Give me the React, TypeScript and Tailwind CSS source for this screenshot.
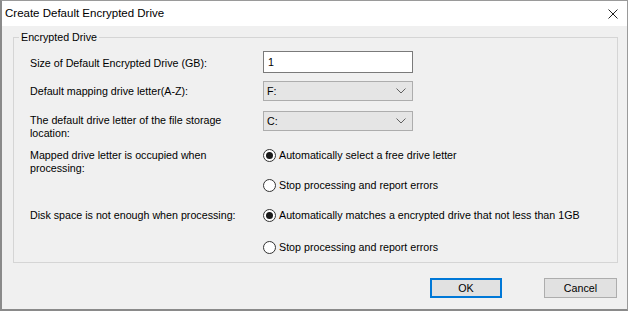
import React from "react"

function Radio({ checked, label }: { checked?: boolean; label: string }) {
  return (
    <label className="flex items-center h-[13px] gap-[3px] leading-[13px]">
      <span className="flex items-center justify-center w-[13px] h-[13px] rounded-full border border-[#333333] bg-white shrink-0">
        {checked && <span className="w-[7px] h-[7px] rounded-full bg-[#1a1a1a]" />}
      </span>
      <span>{label}</span>
    </label>
  )
}

function Chevron() {
  return (
    <svg width="10" height="6" viewBox="0 0 10 6" className="shrink-0">
      <path d="M0.5 0.5 L5 5 L9.5 0.5" fill="none" stroke="#606060" strokeWidth="1" />
    </svg>
  )
}

function Select({ value }: { value: string }) {
  return (
    <div className="flex items-center justify-between w-[150px] h-[20px] bg-[#e5e5e5] border border-[#adadad] pl-[3px] pr-[6px]">
      <span>{value}</span>
      <Chevron />
    </div>
  )
}

export default function App() {
  return (
    <div className="w-[628px] h-[311px] bg-[#f0f0f0] border border-[#9a9a9a] border-l-2 border-b-2 border-l-[#8a8a8a] border-b-[#8a8a8a] flex flex-col font-['Liberation_Sans',Arial,sans-serif] text-[10.7px] text-black">
      {/* title bar */}
      <div className="h-[25px] bg-white flex items-center justify-between pl-[3px] pr-[9px] shrink-0">
        <span className="text-[11.5px]">Create Default Encrypted Drive</span>
        <svg width="10" height="10" viewBox="0 0 10 10">
          <path d="M0.5 0.5 L9.5 9.5 M9.5 0.5 L0.5 9.5" stroke="#222" strokeWidth="1" fill="none" />
        </svg>
      </div>

      <fieldset className="mt-[5px] ml-[11px] w-[605px] h-[232px] border border-[#d5d5d5] pl-[5px] shrink-0">
        <legend className="px-[2px] leading-[13px]">Encrypted Drive</legend>
        <div className="flex flex-col pl-[11px]">
          <div className="flex items-center mt-[7px] h-[22px]">
            <span className="w-[233px] pt-[3px]">Size of Default Encrypted Drive (GB):</span>
            <div className="w-[150px] h-[22px] bg-white border border-[#7a7a7a] flex items-center pl-[4px]">1</div>
          </div>
          <div className="flex items-center mt-[8px] h-[20px]">
            <span className="w-[233px]">Default mapping drive letter(A-Z):</span>
            <Select value="F:" />
          </div>
          <div className="flex items-start mt-[10px] h-[28px]">
            <span className="w-[233px] leading-[13px] pt-[3px]">
              The default drive letter of the file storage
              <br />
              location:
            </span>
            <Select value="C:" />
          </div>
          <div className="flex items-start mt-[10px] h-[26px]">
            <span className="w-[233px] leading-[13px]">
              Mapped drive letter is occupied when
              <br />
              processing:
            </span>
            <Radio checked label="Automatically select a free drive letter" />
          </div>
          <div className="flex items-start mt-[4px] h-[13px]">
            <span className="w-[233px]" />
            <Radio label="Stop processing and report errors" />
          </div>
          <div className="flex items-center mt-[17px] h-[13px]">
            <span className="w-[233px]">Disk space is not enough when processing:</span>
            <Radio checked label="Automatically matches a encrypted drive that not less than 1GB" />
          </div>
          <div className="flex items-start mt-[19px] h-[13px]">
            <span className="w-[233px]" />
            <Radio label="Stop processing and report errors" />
          </div>
        </div>
      </fieldset>

      <div className="flex justify-end gap-[42px] mt-[15px] pr-[10px]">
        <button className="w-[72px] h-[20px] bg-[#e1e1e1] border-2 border-[#0078d7] leading-none">OK</button>
        <button className="w-[73px] h-[20px] bg-[#e1e1e1] border border-[#adadad] leading-none">Cancel</button>
      </div>
    </div>
  )
}
